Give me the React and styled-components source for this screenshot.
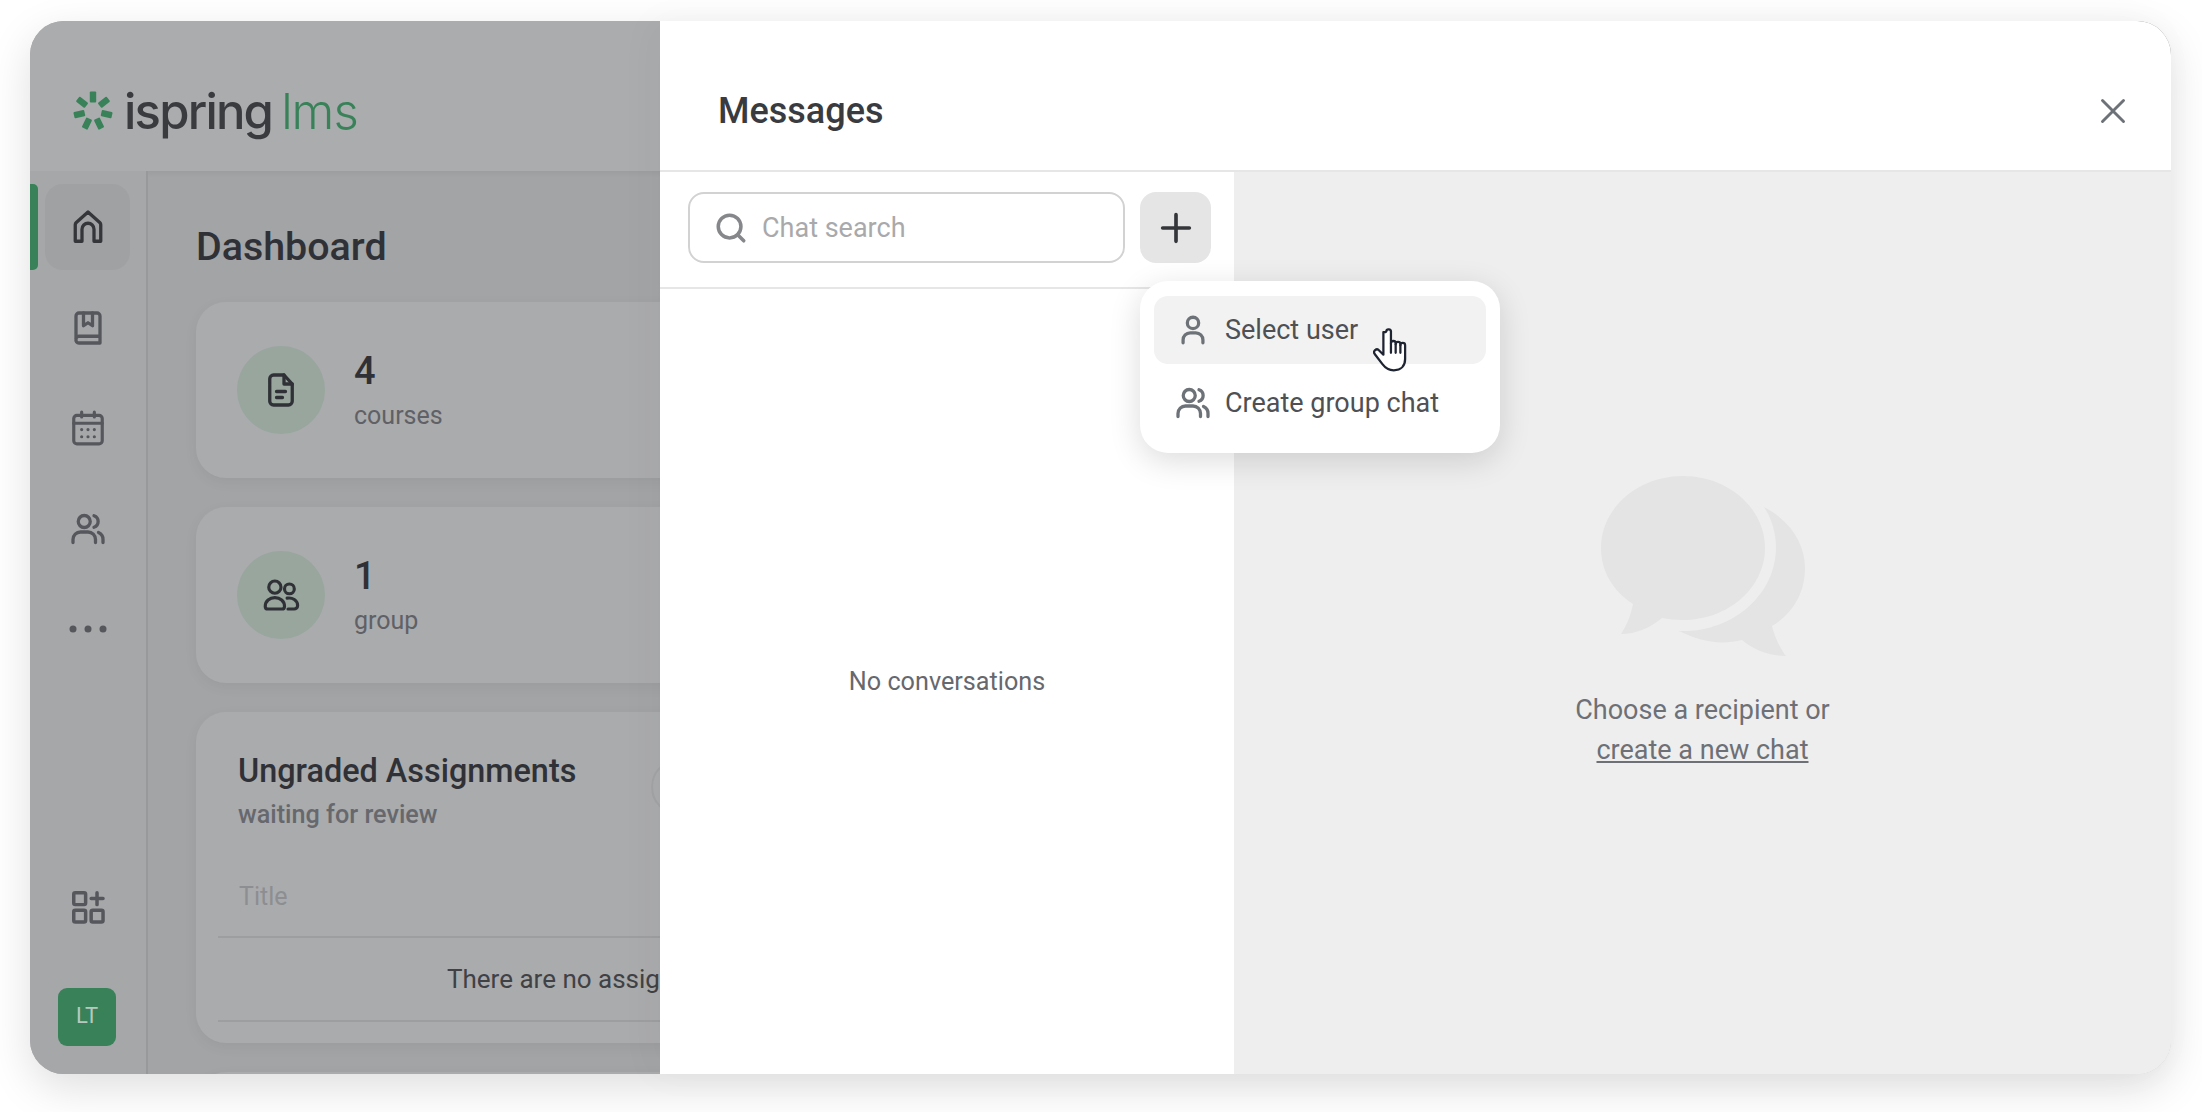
import React from 'react'
import styled, { createGlobalStyle } from 'styled-components'

const GlobalStyle = createGlobalStyle`
    html, body {
        margin: 0;
        background: #fff;
        font-family: Roboto, "Liberation Sans", sans-serif;
    }
    * { box-sizing: border-box; }
`

const Page = styled.div`
    width: 2202px;
    height: 1112px;
    padding: 21px 31px 38px 30px;
    overflow: hidden;
`

const Window = styled.div`
    position: relative;
    height: 1053px;
    border-radius: 34px;
    background: #a3a4a6;
    box-shadow: 0 14px 44px rgba(0, 0, 0, .13);
`

const Backdrop = styled.div`
    height: 100%;
    display: flex;
    flex-direction: column;
    border-radius: 34px;
    overflow: hidden;
`

const TopBar = styled.header`
    flex: 0 0 150px;
    display: flex;
    align-items: center;
    padding: 30px 0 0 43px;
    background: #abacae;
    box-shadow: 0 2px 6px rgba(0, 0, 0, .05);
`

const LogoText = styled.span`
    margin-left: 11px;
    font-family: Inter, sans-serif;
    font-size: 49px;
    font-weight: 500;
    letter-spacing: -1.8px;
    color: #3a3b3f;
`

const LogoLms = styled.span`
    margin-left: 9px;
    font-family: Inter, sans-serif;
    font-size: 49px;
    font-weight: 300;
    letter-spacing: -1px;
    color: #398259;
`

const Body = styled.div`
    flex: 1;
    display: flex;
    min-height: 0;
`

const Sidebar = styled.nav`
    flex: 0 0 118px;
    display: flex;
    flex-direction: column;
    gap: 14.5px;
    padding: 13px 0 28px 15px;
    background: #a6a7a9;
    border-right: 2px solid #98999b;
`

const NavItem = styled.div`
    position: relative;
    flex: 0 0 86px;
    width: 85px;
    display: flex;
    align-items: center;
    justify-content: center;
    border-radius: 18px;
    color: ${p => (p.$active ? '#35363a' : '#55575c')};
    background: ${p => (p.$active ? '#a0a1a3' : 'transparent')};
    margin-top: ${p => (p.$bottom ? 'auto' : '0')};

    ${p => p.$active && `
        &::before {
            content: '';
            position: absolute;
            left: -15px;
            top: 0;
            bottom: 0;
            width: 8px;
            border-radius: 0 5px 5px 0;
            background: #398259;
        }
    `}
`

const Avatar = styled.div`
    flex: 0 0 58px;
    width: 58px;
    margin: 24px 0 0 13px;
    display: flex;
    align-items: center;
    justify-content: center;
    padding-bottom: 4px;
    border-radius: 9px;
    background: #398259;
    color: #b7c9bf;
    font-size: 22px;
`

const Content = styled.main`
    flex: 1;
    min-width: 0;
    padding: 51px 0 0 48px;
    overflow: hidden;
`

const PageTitle = styled.h1`
    margin: 0 0 30px;
    font-size: 39.4px;
    line-height: 50px;
    font-weight: 500;
    color: #303136;
`

const Cards = styled.div`
    display: flex;
    flex-direction: column;
    gap: 29px;
`

const Card = styled.section`
    width: 1500px;
    height: ${p => p.$height}px;
    border-radius: 30px;
    background: #aaabad;
    box-shadow: 0 4px 14px rgba(0, 0, 0, .05);
`

const StatCard = styled(Card)`
    display: flex;
    align-items: center;
    gap: 29px;
    padding-left: 41px;
`

const IconCircle = styled.div`
    width: 88px;
    height: 88px;
    border-radius: 50%;
    display: flex;
    align-items: center;
    justify-content: center;
    background: #98a69e;
    color: #2f3136;
`

const StatText = styled.div`
    margin-top: 2px;
`

const StatValue = styled.div`
    font-size: 38px;
    line-height: 44px;
    font-weight: 500;
    color: #303136;
`

const StatLabel = styled.div`
    margin-top: 5px;
    font-size: 25px;
    line-height: 36px;
    color: #5f6166;
`

const AssignCard = styled(Card)`
    padding: 37px 0 0 22px;
`

const AssignHead = styled.div`
    display: flex;
    padding-left: 20px;
`

const AssignTitle = styled.h2`
    margin: 0;
    font-size: 32.4px;
    line-height: 44px;
    font-weight: 500;
    color: #303136;
`

const AssignSub = styled.div`
    margin-top: 4px;
    font-size: 25.2px;
    line-height: 36px;
    font-weight: 500;
    color: #66686d;
`

const RoundButton = styled.div`
    width: 56px;
    height: 56px;
    margin: 10px 0 0 75px;
    border-radius: 50%;
    border: 2px solid #a2a3a5;
`

const TableHead = styled.div`
    height: 78px;
    margin-top: 27px;
    padding: 0 0 4px 21px;
    display: flex;
    align-items: center;
    font-size: 25px;
    color: #8d8e91;
    border-bottom: 2px solid #9d9ea0;
`

const TableEmpty = styled.div`
    height: 84px;
    padding-left: 229px;
    display: flex;
    align-items: center;
    font-size: 26px;
    color: #404145;
    border-bottom: 2px solid #9d9ea0;
`

const Modal = styled.div`
    position: absolute;
    inset: 0 0 0 630px;
    display: flex;
    flex-direction: column;
    border-radius: 0 34px 34px 0;
    overflow: hidden;
    background: #fff;
    box-shadow: -8px 0 40px rgba(0, 0, 0, .03);
`

const ModalHead = styled.div`
    flex: 0 0 151px;
    display: flex;
    align-items: center;
    justify-content: space-between;
    padding: 30px 44px 0 58px;
    border-bottom: 2px solid #e6e6e6;
`

const ModalTitle = styled.h2`
    margin: 0;
    font-size: 36px;
    font-weight: 500;
    color: #3a3b3f;
`

const CloseButton = styled.div`
    width: 28px;
    height: 28px;
    color: #6d7278;
`

const ModalBody = styled.div`
    flex: 1;
    display: flex;
    min-height: 0;
`

const ChatList = styled.div`
    flex: 0 0 574px;
    display: flex;
    flex-direction: column;
`

const Toolbar = styled.div`
    display: flex;
    gap: 15px;
    padding: 20px 23px 24px 28px;
    border-bottom: 2px solid #e6e6e6;
`

const SearchBox = styled.div`
    flex: 1;
    height: 71px;
    display: flex;
    align-items: center;
    gap: 14px;
    padding-left: 24px;
    border: 2px solid #d2d2d2;
    border-radius: 16px;
    color: #85878a;
`

const SearchText = styled.span`
    font-size: 27px;
    color: #a9a9ab;
`

const AddWrap = styled.div`
    position: relative;
    width: 71px;
`

const AddButton = styled.div`
    height: 71px;
    display: flex;
    align-items: center;
    justify-content: center;
    border-radius: 16px;
    background: #e5e5e5;
    color: #35363a;
`

const Menu = styled.div`
    position: absolute;
    top: 89px;
    left: 0;
    width: 360px;
    height: 172px;
    padding: 15px 14px;
    border-radius: 28px;
    background: #fff;
    box-shadow: 0 8px 32px rgba(0, 0, 0, .14);
    z-index: 2;
`

const MenuItem = styled.div`
    position: relative;
    height: 68px;
    display: flex;
    align-items: center;
    gap: 13px;
    padding-left: 20px;
    margin-bottom: 5px;
    border-radius: 14px;
    font-size: 27px;
    color: #4e5054;
    background: ${p => (p.$hover ? '#f2f2f2' : 'transparent')};
`

const MenuIcon = styled.span`
    flex: 0 0 38px;
    display: flex;
    justify-content: center;
    color: #6d7278;
`

const Cursor = styled.svg`
    position: absolute;
    left: 219px;
    top: 30px;
    width: 34px;
    height: 47px;
`

const NoChats = styled.div`
    flex: 1;
    display: flex;
    align-items: center;
    justify-content: center;
    font-size: 25.2px;
    color: #66686d;
`

const Placeholder = styled.div`
    flex: 1;
    display: flex;
    flex-direction: column;
    align-items: center;
    justify-content: center;
    background: #eeeeee;
`

const PlaceholderText = styled.div`
    margin-top: 34px;
    font-size: 27px;
    line-height: 40px;
    text-align: center;
    color: #6d7076;
`

const NewChatLink = styled.a`
    color: inherit;
    text-decoration: underline;
`

// line icons, all drawn on a 24px grid
const Icon = ({ size = 34, width = 2, children }) => (
    <svg width={size} height={size} viewBox="0 0 24 24" fill="none" stroke="currentColor"
        strokeWidth={width} strokeLinecap="round" strokeLinejoin="round">
        {children}
    </svg>
)

const HomeIcon = () => (
    <Icon size={36} width={2.200}>
        <path d="M3.500 21.500V10.500c0-.6.3-1.100.7-1.500L12 2l7.800 7c.4.4.7.9.7 1.500V21.500h-4.500V13.500a4 4 0 0 0-8 0v8z" />
    </Icon>
)

const BookIcon = () => (
    <Icon size={36} width={2.200}>
        <path d="M4 19V4a2 2 0 0 1 2-2h12a2 2 0 0 1 2 2v18H6a2 2 0 0 1-2-2.500c0-1.200 1-2 2-2h14" />
        <path d="M9 2v8.500l3-2 3 2V2" />
    </Icon>
)

const CalendarIcon = () => (
    <Icon size={38} width={2}>
        <rect x="3" y="4" width="18" height="18" rx="2" />
        <path d="M3 9h18M8 2v3M16 2v3" />
        <path d="M8 13h.01M12 13h.01M16 13h.01M8 17.500h.01M12 17.500h.01M16 17.500h.01" />
    </Icon>
)

const UsersIcon = ({ size = 36 }) => (
    <Icon size={size} width={2.200}>
        <circle cx="9.500" cy="7" r="4" />
        <path d="M2 21v-2a5 5 0 0 1 5-5h5a5 5 0 0 1 5 5v2" />
        <path d="M16 3.200a4 4 0 0 1 0 7.600M19 14.300a5 5 0 0 1 3 4.700v2" />
    </Icon>
)

const UserIcon = () => (
    <Icon size={34} width={2.300}>
        <circle cx="12" cy="7" r="4" />
        <path d="M5 21v-2a5 5 0 0 1 5-5h4a5 5 0 0 1 5 5v2" />
    </Icon>
)

const DotsIcon = () => (
    <svg width="38" height="8" viewBox="0 0 38 8" fill="currentColor">
        <circle cx="4" cy="4" r="3.500" />
        <circle cx="19" cy="4" r="3.500" />
        <circle cx="34" cy="4" r="3.500" />
    </svg>
)

const AppsIcon = () => (
    <Icon size={38} width={2.200}>
        <rect x="3" y="3" width="7.500" height="7.500" rx="1" />
        <rect x="3" y="14" width="7.500" height="7.500" rx="1" />
        <rect x="14" y="14" width="7.500" height="7.500" rx="1" />
        <path d="M17.700 3v7.500M14 6.700h7.500" />
    </Icon>
)

const DocIcon = () => (
    <Icon size={36} width={2.200}>
        <path d="M14 2H7a2.500 2.500 0 0 0-2.500 2.500v15A2.500 2.500 0 0 0 7 22h10a2.500 2.500 0 0 0 2.500-2.500V8z" />
        <path d="M14 2v6h5.500M9 13h6M9 17h4" />
    </Icon>
)

const GroupIcon = () => (
    <Icon size={42} width={1.800}>
        <circle cx="8.500" cy="7.500" r="3.500" />
        <circle cx="16.800" cy="8.500" r="2.800" />
        <path d="M3 18.500c0-3 2.500-5 5.500-5s5.500 2 5.500 5c0 1-.8 1.500-1.500 1.500h-8C3.800 20 3 19.500 3 18.500z" />
        <path d="M15.500 13.800c3-.5 6 1.200 6 4.200 0 1.200-1 2-2 2H16" />
    </Icon>
)

const SearchIcon = () => (
    <Icon size={34} width={2.500}>
        <circle cx="11" cy="11" r="8" />
        <path d="M21 21l-4.300-4.300" />
    </Icon>
)

const LogoStar = () => (
    <svg width="40" height="40" viewBox="-20 -20 40 40" fill="#398259">
        {[0, 1, 2, 3, 4, 5, 6].map(i => (
            <rect key={i} x="-3.200" y="-19.500" width="6.400" height="11" rx="1"
                transform={`rotate(${(i * 360) / 7})`} />
        ))}
    </svg>
)

const BubblesIcon = () => (
    <svg width="204" height="180" viewBox="0 0 204 180" fill="#e4e4e4">
        <path d="M82 0C127 0 164 32 164 72C164 112 127 144 82 144C74 144 67 143 61 142C49 152 35 158 20 158C26 149 30 139 32 128C12 115 0 95 0 72C0 32 37 0 82 0Z" />
        <path d="M163 31C190 45 204 68 204 92C204 118 191 138 171 150C174 162 179 172 185 180C168 180 153 174 141 164C118 170 96 164 78 155C130 157 175 120 175 71C175 58 171 43 163 31Z" />
    </svg>
)

const App = () => {
    return (
        <Page>
            <GlobalStyle />
            <Window>
                <Backdrop>
                    <TopBar>
                        <LogoStar />
                        <LogoText>ispring</LogoText>
                        <LogoLms>lms</LogoLms>
                    </TopBar>
                    <Body>
                        <Sidebar>
                            <NavItem $active><HomeIcon /></NavItem>
                            <NavItem><BookIcon /></NavItem>
                            <NavItem><CalendarIcon /></NavItem>
                            <NavItem><UsersIcon /></NavItem>
                            <NavItem><DotsIcon /></NavItem>
                            <NavItem $bottom><AppsIcon /></NavItem>
                            <Avatar>LT</Avatar>
                        </Sidebar>
                        <Content>
                            <PageTitle>Dashboard</PageTitle>
                            <Cards>
                                <StatCard $height={176}>
                                    <IconCircle><DocIcon /></IconCircle>
                                    <StatText>
                                        <StatValue>4</StatValue>
                                        <StatLabel>courses</StatLabel>
                                    </StatText>
                                </StatCard>
                                <StatCard $height={176}>
                                    <IconCircle><GroupIcon /></IconCircle>
                                    <StatText>
                                        <StatValue>1</StatValue>
                                        <StatLabel>group</StatLabel>
                                    </StatText>
                                </StatCard>
                                <AssignCard $height={331}>
                                    <AssignHead>
                                        <div>
                                            <AssignTitle>Ungraded Assignments</AssignTitle>
                                            <AssignSub>waiting for review</AssignSub>
                                        </div>
                                        <RoundButton />
                                    </AssignHead>
                                    <TableHead>Title</TableHead>
                                    <TableEmpty>There are no assignments</TableEmpty>
                                </AssignCard>
                                <Card $height={200} />
                            </Cards>
                        </Content>
                    </Body>
                </Backdrop>
                <Modal>
                    <ModalHead>
                        <ModalTitle>Messages</ModalTitle>
                        <CloseButton>
                            <Icon size={28} width={2.500}><path d="M3 3l18 18M21 3L3 21" /></Icon>
                        </CloseButton>
                    </ModalHead>
                    <ModalBody>
                        <ChatList>
                            <Toolbar>
                                <SearchBox>
                                    <SearchIcon />
                                    <SearchText>Chat search</SearchText>
                                </SearchBox>
                                <AddWrap>
                                    <AddButton>
                                        <Icon size={40} width={2.200}><path d="M12 4v16M4 12h16" /></Icon>
                                    </AddButton>
                                    <Menu>
                                        <MenuItem $hover>
                                            <MenuIcon><UserIcon /></MenuIcon>
                                            Select user
                                            <Cursor viewBox="0 0 36 47" fill="#fff" stroke="#1f2433"
                                                strokeWidth="2.400" strokeLinejoin="round" strokeLinecap="round">
                                                <path d="M11 29L6.500 24.500a3 3 0 0 0-4.500 4L10 39c3 4 6.500 6.500 12 6.500c8 0 12-5 12-12V19a2.500 2.500 0 0 0-5 0v-1a2.500 2.500 0 0 0-5 0v-1a2.500 2.500 0 0 0-5 0V5a2.500 2.500 0 0 0-5-.500L13.500 5 11 5z" />
                                                <path d="M19 17v10M24 18v9M29 19v8" fill="none" />
                                            </Cursor>
                                        </MenuItem>
                                        <MenuItem>
                                            <MenuIcon><UsersIcon size={36} /></MenuIcon>
                                            Create group chat
                                        </MenuItem>
                                    </Menu>
                                </AddWrap>
                            </Toolbar>
                            <NoChats>No conversations</NoChats>
                        </ChatList>
                        <Placeholder>
                            <BubblesIcon />
                            <PlaceholderText>
                                Choose a recipient or<br />
                                <NewChatLink>create a new chat</NewChatLink>
                            </PlaceholderText>
                        </Placeholder>
                    </ModalBody>
                </Modal>
            </Window>
        </Page>
    )
}

export default App
